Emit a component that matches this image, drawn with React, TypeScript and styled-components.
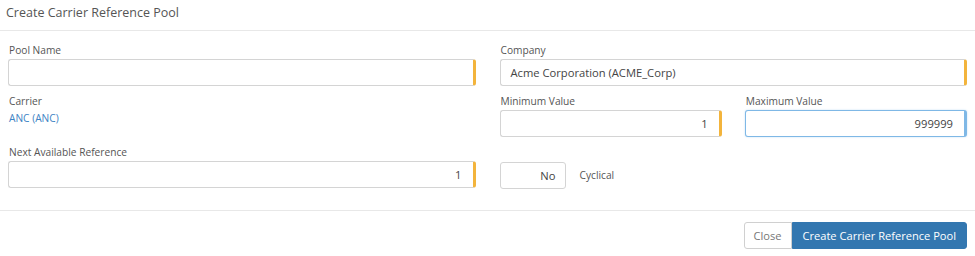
import React from "react";
import styled, { createGlobalStyle } from "styled-components";

const Global = createGlobalStyle`
  html, body { margin: 0; padding: 0; background: #fff; }
  body { font-family: "Open Sans", "Liberation Sans", sans-serif; color: #555; }
  * { box-sizing: border-box; }
`;

const Modal = styled.div`
  width: 975px;
  display: flex;
  flex-direction: column;
`;

const Header = styled.div`
  height: 31px;
  border-bottom: 1px solid #e8e8e8;
  padding: 4px 6px 0;
`;

const Title = styled.h4`
  margin: 0;
  font-size: 12.5px;
  font-weight: 400;
  line-height: 18px;
  color: #555;
`;

const Body = styled.div`
  padding: 11px 8px 21px 8px;
  display: grid;
  grid-template-columns: 1fr 1fr;
  column-gap: 24px;
  row-gap: 7px;
`;

const Field = styled.div`
  display: flex;
  flex-direction: column;
  min-width: 0;
`;

const Label = styled.label`
  display: block;
  font-size: 10.2px;
  line-height: 16px;
  height: 17px;
  padding-left: 1px;
  color: #555;
`;

const Input = styled.div<{ $align?: "left" | "right"; $accent?: "required" | "focus" }>`
  height: 27px;
  border: 1px solid ${(p) => (p.$accent === "focus" ? "#7fb8e6" : "#d4d4d4")};
  border-right: 3px solid
    ${(p) => (p.$accent === "focus" ? "#7fb8e6" : p.$accent === "required" ? "#f3b43c" : "#d4d4d4")};
  border-radius: 3px;
  display: flex;
  align-items: center;
  justify-content: ${(p) => (p.$align === "right" ? "flex-end" : "flex-start")};
  padding: 0 ${(p) => (p.$align === "right" ? "11px" : "10px")};
  font-size: 11.2px;
  color: #444;
  background: #fff;
  box-shadow: ${(p) => (p.$accent === "focus" ? "0 0 2px rgba(102,175,233,0.4)" : "none")};
`;

const Link = styled.span`
  font-size: 10.2px;
  line-height: 16px;
  color: #3d83c4;
  padding-left: 1px;
`;

const Pair = styled.div`
  display: grid;
  grid-template-columns: 1fr 1fr;
  column-gap: 23px;
`;

const ToggleRow = styled.div`
  display: flex;
  align-items: center;
  gap: 14px;
  padding-top: 18px;
`;

const Toggle = styled.div`
  width: 66px;
  height: 27px;
  border: 1px solid #d4d4d4;
  border-radius: 3px;
  display: flex;
  align-items: center;
  justify-content: flex-end;
  padding-right: 9px;
  font-size: 11.2px;
  color: #444;
`;

const ToggleLabel = styled.span`
  font-size: 10.2px;
  color: #555;
  margin-top: -2px;
`;

const Footer = styled.div`
  border-top: 1px solid #e8e8e8;
  padding: 11px 8px 8px;
  display: flex;
  justify-content: flex-end;
`;

const Button = styled.button<{ $primary?: boolean }>`
  height: 27px;
  font-family: inherit;
  font-size: 11.1px;
  padding: 0 ${(p) => (p.$primary ? "10px" : "9px")};
  border: 1px solid ${(p) => (p.$primary ? "#3377b0" : "#d0d0d0")};
  background: ${(p) => (p.$primary ? "#3377b0" : "#fff")};
  color: ${(p) => (p.$primary ? "#fff" : "#777")};
  border-radius: ${(p) => (p.$primary ? "0 3px 3px 0" : "3px 0 0 3px")};
  cursor: pointer;
`;

export default function App() {
  return (
    <Modal>
      <Global />
      <Header>
        <Title>Create Carrier Reference Pool</Title>
      </Header>
      <Body>
        <Field>
          <Label>Pool Name</Label>
          <Input $accent="required" />
        </Field>
        <Field>
          <Label>Company</Label>
          <Input $accent="required">Acme Corporation (ACME_Corp)</Input>
        </Field>
        <Field>
          <Label>Carrier</Label>
          <Link>ANC (ANC)</Link>
        </Field>
        <Pair>
          <Field>
            <Label>Minimum Value</Label>
            <Input $accent="required" $align="right">1</Input>
          </Field>
          <Field>
            <Label>Maximum Value</Label>
            <Input $accent="focus" $align="right">999999</Input>
          </Field>
        </Pair>
        <Field>
          <Label>Next Available Reference</Label>
          <Input $accent="required" $align="right">1</Input>
        </Field>
        <ToggleRow>
          <Toggle>No</Toggle>
          <ToggleLabel>Cyclical</ToggleLabel>
        </ToggleRow>
      </Body>
      <Footer>
        <Button>Close</Button>
        <Button $primary>Create Carrier Reference Pool</Button>
      </Footer>
    </Modal>
  );
}
